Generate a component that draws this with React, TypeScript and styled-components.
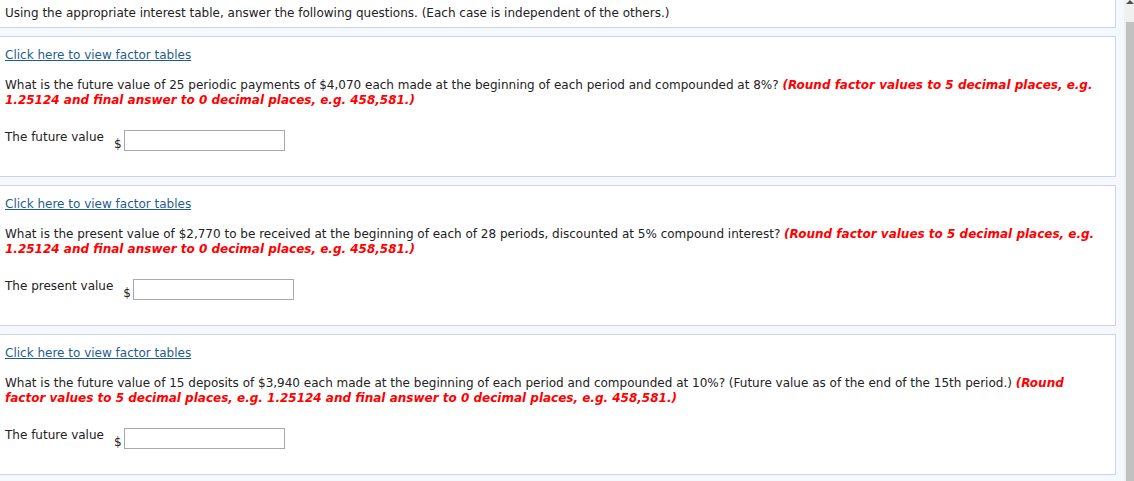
import React from 'react';
import styled, { createGlobalStyle } from 'styled-components';

const GlobalStyle = createGlobalStyle`
  html, body {
    margin: 0;
    padding: 0;
    background: #f5f8fc;
  }
  body {
    font-family: "DejaVu Sans", Verdana, sans-serif;
    font-size: 12px;
    color: #222;
  }
`;

const Page = styled.div`
  display: flex;
  height: 481px;
  overflow: hidden;
`;

const Content = styled.div`
  flex: 1;
  display: flex;
  flex-direction: column;
  gap: 8px;
  padding-right: 8px;
`;

const ScrollTrack = styled.div`
  width: 10px;
  background: #f0f0f0;
  display: flex;
  flex-direction: column;
  align-items: flex-end;
`;

const ScrollArrow = styled.div`
  width: 8px;
  height: 22px;
  display: flex;
  justify-content: center;
`;

const ScrollThumb = styled.div`
  width: 8px;
  flex: 1;
  background: #c1c1c1;
`;

const Intro = styled.div`
  background: #fff;
  border: 1px solid #ccd4e0;
  border-top: none;
  border-left: none;
  height: 28px;
  padding: 6px 5px 0;
  box-sizing: border-box;
`;

const Panel = styled.section`
  background: #fff;
  border: 1px solid #ccd4e0;
  border-left: none;
  height: 141px;
  box-sizing: border-box;
  padding: 11px 5px 0;
  flex-shrink: 0;
`;

const TableLink = styled.a`
  color: #1f5d8e;
  text-decoration: underline;
  cursor: pointer;
`;

const Question = styled.p`
  margin: 16px 0 0;
  line-height: 15px;
  padding-right: 10px;
`;

const Hint = styled.span`
  color: #ff0000;
  font-weight: bold;
  font-style: italic;
`;

const AnswerRow = styled.div`
  display: flex;
  align-items: flex-start;
  margin-top: 22px;
`;

const Label = styled.span<{ $gap: number }>`
  line-height: 15px;
  margin-right: ${(p) => p.$gap}px;
`;

const Currency = styled.span`
  align-self: flex-end;
  line-height: 14px;
  margin-right: 2px;
`;

const AnswerInput = styled.input`
  width: 161px;
  height: 21px;
  box-sizing: border-box;
  border: 1px solid #a9a9a9;
  margin: 0;
  padding: 0 3px;
  font: inherit;
`;

const Answer = ({ label }: { label: string }) => (
  <AnswerRow>
    <Label $gap={10}>{label}</Label>
    <Currency>$</Currency>
    <AnswerInput type="text" />
  </AnswerRow>
);

const hint =
  '(Round factor values to 5 decimal places, e.g. 1.25124 and final answer to 0 decimal places, e.g. 458,581.)';

export default function App() {
  return (
    <>
      <GlobalStyle />
      <Page>
        <Content>
          <Intro>
            Using the appropriate interest table, answer the following questions. (Each case is independent of the others.)
          </Intro>
          <Panel>
            <TableLink>Click here to view factor tables</TableLink>
            <Question>
              What is the future value of 25 periodic payments of $4,070 each made at the beginning of each period and
              compounded at 8%? <Hint>{hint}</Hint>
            </Question>
            <Answer label="The future value" />
          </Panel>
          <Panel>
            <TableLink>Click here to view factor tables</TableLink>
            <Question>
              What is the present value of $2,770 to be received at the beginning of each of 28 periods, discounted at 5%
              compound interest? <Hint>{hint}</Hint>
            </Question>
            <Answer label="The present value" />
          </Panel>
          <Panel>
            <TableLink>Click here to view factor tables</TableLink>
            <Question>
              What is the future value of 15 deposits of $3,940 each made at the beginning of each period and compounded
              at 10%? (Future value as of the end of the 15th period.) <Hint>{hint}</Hint>
            </Question>
            <Answer label="The future value" />
          </Panel>
        </Content>
        <ScrollTrack>
          <ScrollArrow>
            <svg width="8" height="4" viewBox="0 0 8 4">
              <path d="M0 4 L4 0 L8 4 Z" fill="#505050" />
            </svg>
          </ScrollArrow>
          <ScrollThumb />
        </ScrollTrack>
      </Page>
    </>
  );
}
